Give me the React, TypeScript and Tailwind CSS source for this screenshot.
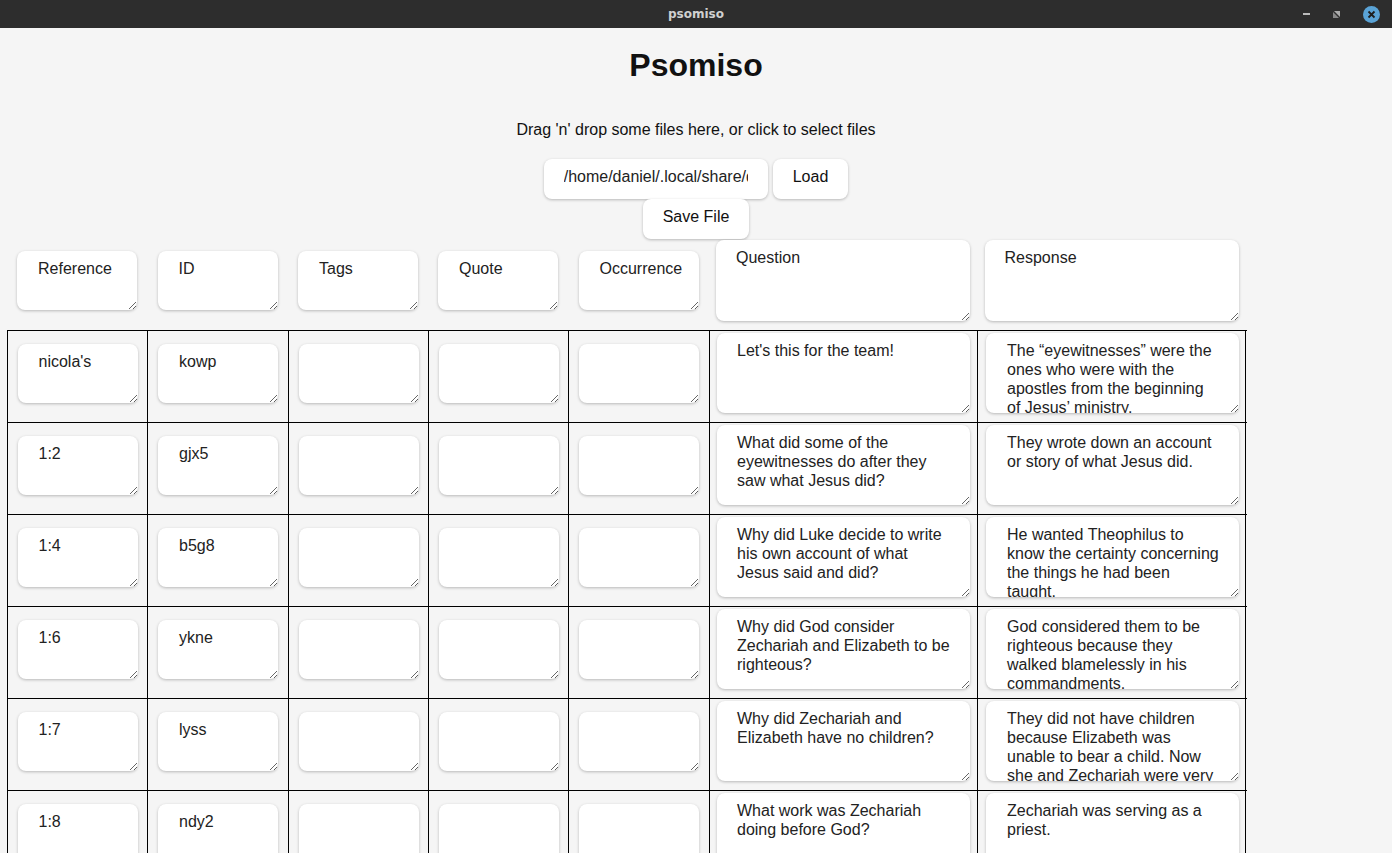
import React from 'react'

const rows = [
  {
    ref: "nicola's",
    id: 'kowp',
    q: "Let's this for the team!",
    r: 'The “eyewitnesses” were the ones who were with the apostles from the beginning of Jesus’ ministry.',
  },
  {
    ref: '1:2',
    id: 'gjx5',
    q: 'What did some of the eyewitnesses do after they saw what Jesus did?',
    r: 'They wrote down an account or story of what Jesus did.',
  },
  {
    ref: '1:4',
    id: 'b5g8',
    q: 'Why did Luke decide to write his own account of what Jesus said and did?',
    r: 'He wanted Theophilus to know the certainty concerning the things he had been taught.',
  },
  {
    ref: '1:6',
    id: 'ykne',
    q: 'Why did God consider Zechariah and Elizabeth to be righteous?',
    r: 'God considered them to be righteous because they walked blamelessly in his commandments.',
  },
  {
    ref: '1:7',
    id: 'lyss',
    q: 'Why did Zechariah and Elizabeth have no children?',
    r: 'They did not have children because Elizabeth was unable to bear a child. Now she and Zechariah were very old.',
  },
  {
    ref: '1:8',
    id: 'ndy2',
    q: 'What work was Zechariah doing before God?',
    r: 'Zechariah was serving as a priest.',
  },
]

const cols = 'grid grid-cols-[140px_141px_140px_140px_141px_268px_269px]'

const base =
  'block rounded-lg bg-white pt-2 text-base leading-[19px] text-[#222] shadow-[0_1px_3px_rgba(0,0,0,0.25)] outline-none overflow-hidden [scrollbar-width:none] '

// short cells, question column, response column
const Small = ({ value }: { value: string }) => (
  <textarea defaultValue={value} className={base + 'h-[59px] w-[120px] pl-[21px] pr-3'} />
)
const Question = ({ value }: { value: string }) => (
  <textarea defaultValue={value} className={base + 'h-[80px] w-[253px] pl-5 pr-[17px]'} />
)
const Response = ({ value }: { value: string }) => (
  <textarea defaultValue={value} className={base + 'ml-[2px] h-[80px] w-[253px] pl-[21px] pr-5'} />
)

const Cell = ({ children, last }: { children: React.ReactNode; last?: boolean }) => (
  <div
    className={
      'flex items-center justify-center border-l border-black pt-[2px] pb-[9px] ' +
      (last ? 'border-r' : '')
    }
  >
    {children}
  </div>
)

export default function App() {
  return (
    <div className="min-h-screen bg-[#f5f5f5] font-['Liberation_Sans',Arial,sans-serif] text-[#111]">
      {/* window title bar */}
      <div className="relative flex h-7 items-center justify-center bg-[#2d2d2d]">
        <span className="font-['DejaVu_Sans',sans-serif] text-[12px] font-bold text-[#d0d0d0]">psomiso</span>
        <div className="absolute right-3 top-0 flex h-7 items-center gap-[22px]">
          <div className="h-[2px] w-[7px] bg-[#bbb]" />
          <svg width="9" height="9" viewBox="0 0 9 9">
            <path d="M2 1h6v6z" fill="#aaa" />
            <path d="M1 2v6h6z" fill="#888" />
          </svg>
          <div className="flex h-[17px] w-[17px] items-center justify-center rounded-full bg-[#5aa3d6]">
            <svg width="9" height="9" viewBox="0 0 9 9">
              <path d="M1.5 1.5l6 6M7.5 1.5l-6 6" stroke="#1e1e1e" strokeWidth="1.8" />
            </svg>
          </div>
        </div>
      </div>

      <h1 className="pt-[19px] text-center text-[32px] font-bold leading-[37px]">Psomiso</h1>

      <p className="mt-[37px] text-center text-base leading-[18px]">
        Drag 'n' drop some files here, or click to select files
      </p>

      <div className="mt-[20px] flex justify-center gap-[5px]">
        <input
          defaultValue="/home/daniel/.local/share/dev.psomiso/tsv/en_tq_LUK.tsv"
          className="h-10 w-[224px] rounded-lg bg-white px-5 pb-1 text-base text-[#222] shadow-[0_1px_3px_rgba(0,0,0,0.25)] outline-none"
        />
        <button className="h-10 rounded-lg bg-white px-5 pb-1 text-base text-[#111] shadow-[0_1px_3px_rgba(0,0,0,0.25)]">
          Load
        </button>
      </div>
      <div className="flex justify-center">
        <button className="h-10 rounded-lg bg-white px-5 pb-1 text-base text-[#111] shadow-[0_1px_3px_rgba(0,0,0,0.25)]">
          Save File
        </button>
      </div>

      <div className="ml-[7px] mt-[1px]">
        <div className={cols + ' h-[81px] items-center'}>
          {['Reference', 'ID', 'Tags', 'Quote', 'Occurrence'].map((h) => (
            <div key={h} className="flex justify-center">
              <Small value={h} />
            </div>
          ))}
          <div className="flex justify-center">
            <textarea defaultValue="Question" className={base + 'h-[81px] w-[254px] pl-5 pr-3'} />
          </div>
          <div className="flex justify-center">
            <textarea defaultValue="Response" className={base + 'h-[81px] w-[254px] pl-5 pr-3'} />
          </div>
        </div>

        <div className="mt-[9px] w-[1240px] border-t border-black">
          {rows.map((row) => (
            <div key={row.id} className={cols + ' border-b border-black'}>
              <Cell><Small value={row.ref} /></Cell>
              <Cell><Small value={row.id} /></Cell>
              <Cell><Small value="" /></Cell>
              <Cell><Small value="" /></Cell>
              <Cell><Small value="" /></Cell>
              <Cell><Question value={row.q} /></Cell>
              <Cell last><Response value={row.r} /></Cell>
            </div>
          ))}
        </div>
      </div>
    </div>
  )
}
